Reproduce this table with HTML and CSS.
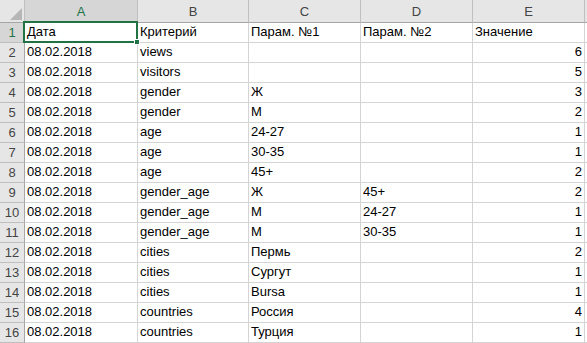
FILE: index.html
```html
<!DOCTYPE html>
<html lang="ru">
<head>
<meta charset="utf-8">
<link rel="stylesheet" href="styles.css">
</head>
<body>
<div class="sheet">
  <div class="grid">
    <div class="hd corner"><svg class="tri" width="12" height="12" viewBox="0 0 12 12"><polygon points="12,0 12,12 0,12" fill="#b6b6b6"/></svg></div>
    <div class="hd col sel">A</div><div class="hd col">B</div><div class="hd col">C</div><div class="hd col">D</div><div class="hd col">E</div><div class="hd col last"></div>

    <div class="hd rn sel">1</div><div class="c">Дата</div><div class="c">Критерий</div><div class="c">Парам. №1</div><div class="c">Парам. №2</div><div class="c">Значение</div><div class="c last"></div>
    <div class="hd rn">2</div><div class="c">08.02.2018</div><div class="c">views</div><div class="c"></div><div class="c"></div><div class="c n">6</div><div class="c last"></div>
    <div class="hd rn">3</div><div class="c">08.02.2018</div><div class="c">visitors</div><div class="c"></div><div class="c"></div><div class="c n">5</div><div class="c last"></div>
    <div class="hd rn">4</div><div class="c">08.02.2018</div><div class="c">gender</div><div class="c">Ж</div><div class="c"></div><div class="c n">3</div><div class="c last"></div>
    <div class="hd rn">5</div><div class="c">08.02.2018</div><div class="c">gender</div><div class="c">М</div><div class="c"></div><div class="c n">2</div><div class="c last"></div>
    <div class="hd rn">6</div><div class="c">08.02.2018</div><div class="c">age</div><div class="c">24-27</div><div class="c"></div><div class="c n">1</div><div class="c last"></div>
    <div class="hd rn">7</div><div class="c">08.02.2018</div><div class="c">age</div><div class="c">30-35</div><div class="c"></div><div class="c n">1</div><div class="c last"></div>
    <div class="hd rn">8</div><div class="c">08.02.2018</div><div class="c">age</div><div class="c">45+</div><div class="c"></div><div class="c n">2</div><div class="c last"></div>
    <div class="hd rn">9</div><div class="c">08.02.2018</div><div class="c">gender_age</div><div class="c">Ж</div><div class="c">45+</div><div class="c n">2</div><div class="c last"></div>
    <div class="hd rn">10</div><div class="c">08.02.2018</div><div class="c">gender_age</div><div class="c">М</div><div class="c">24-27</div><div class="c n">1</div><div class="c last"></div>
    <div class="hd rn">11</div><div class="c">08.02.2018</div><div class="c">gender_age</div><div class="c">М</div><div class="c">30-35</div><div class="c n">1</div><div class="c last"></div>
    <div class="hd rn">12</div><div class="c">08.02.2018</div><div class="c">cities</div><div class="c">Пермь</div><div class="c"></div><div class="c n">2</div><div class="c last"></div>
    <div class="hd rn">13</div><div class="c">08.02.2018</div><div class="c">cities</div><div class="c">Сургут</div><div class="c"></div><div class="c n">1</div><div class="c last"></div>
    <div class="hd rn">14</div><div class="c">08.02.2018</div><div class="c">cities</div><div class="c">Bursa</div><div class="c"></div><div class="c n">1</div><div class="c last"></div>
    <div class="hd rn">15</div><div class="c">08.02.2018</div><div class="c">countries</div><div class="c">Россия</div><div class="c"></div><div class="c n">4</div><div class="c last"></div>
    <div class="hd rn">16</div><div class="c">08.02.2018</div><div class="c">countries</div><div class="c">Турция</div><div class="c"></div><div class="c n">1</div><div class="c last"></div>
  </div>
  <div class="selection"><span class="handle"></span></div>
</div>
</body>
</html>
```

FILE: styles.css
```css
* { box-sizing: border-box; }
html, body { margin: 0; padding: 0; background: #ffffff; }
body {
  font-family: "Liberation Sans", Arial, sans-serif;
  font-size: 13px;
  color: #000;
  overflow: hidden;
}
.sheet { position: relative; width: 587px; height: 343px; overflow: hidden; }
.grid {
  display: grid;
  grid-template-columns: 25px 113px 111px 112px 112px 112px 40px;
  grid-template-rows: 23px repeat(16, 20px);
}
.hd {
  background: #e6e6e6;
  color: #444444;
  display: flex;
  align-items: flex-end;
  justify-content: center;
  padding-bottom: 3px;
}
.col {
  border-right: 1px solid #bfbfbf;
  border-bottom: 1px solid #a6a6a6;
}
.col.last { border-right: none; }
.corner {
  border-right: 1px solid #bfbfbf;
  border-bottom: 1px solid #a6a6a6;
  position: relative;
}
.tri { position: absolute; right: 2px; bottom: 2px; }
.rn {
  border-right: 1px solid #a6a6a6;
  border-bottom: 1px solid #bfbfbf;
  padding-bottom: 2px;
}
.hd.sel { background: #d6d6d6; color: #217346; }
.c {
  border-right: 1px solid #d4d4d4;
  border-bottom: 1px solid #d4d4d4;
  padding: 0 2px 3px 2px;
  display: flex;
  align-items: flex-end;
  white-space: nowrap;
  overflow: visible;
  line-height: 15px;
}
.c.n { justify-content: flex-end; }
.c.last { border-right: none; }
.selection {
  position: absolute;
  left: 23px;
  top: 21px;
  width: 115px;
  height: 22px;
  border: 2px solid #217346;
}
.handle {
  position: absolute;
  right: -4px;
  bottom: -4px;
  width: 6px;
  height: 6px;
  background: #217346;
  border: 1px solid #ffffff;
}
```
